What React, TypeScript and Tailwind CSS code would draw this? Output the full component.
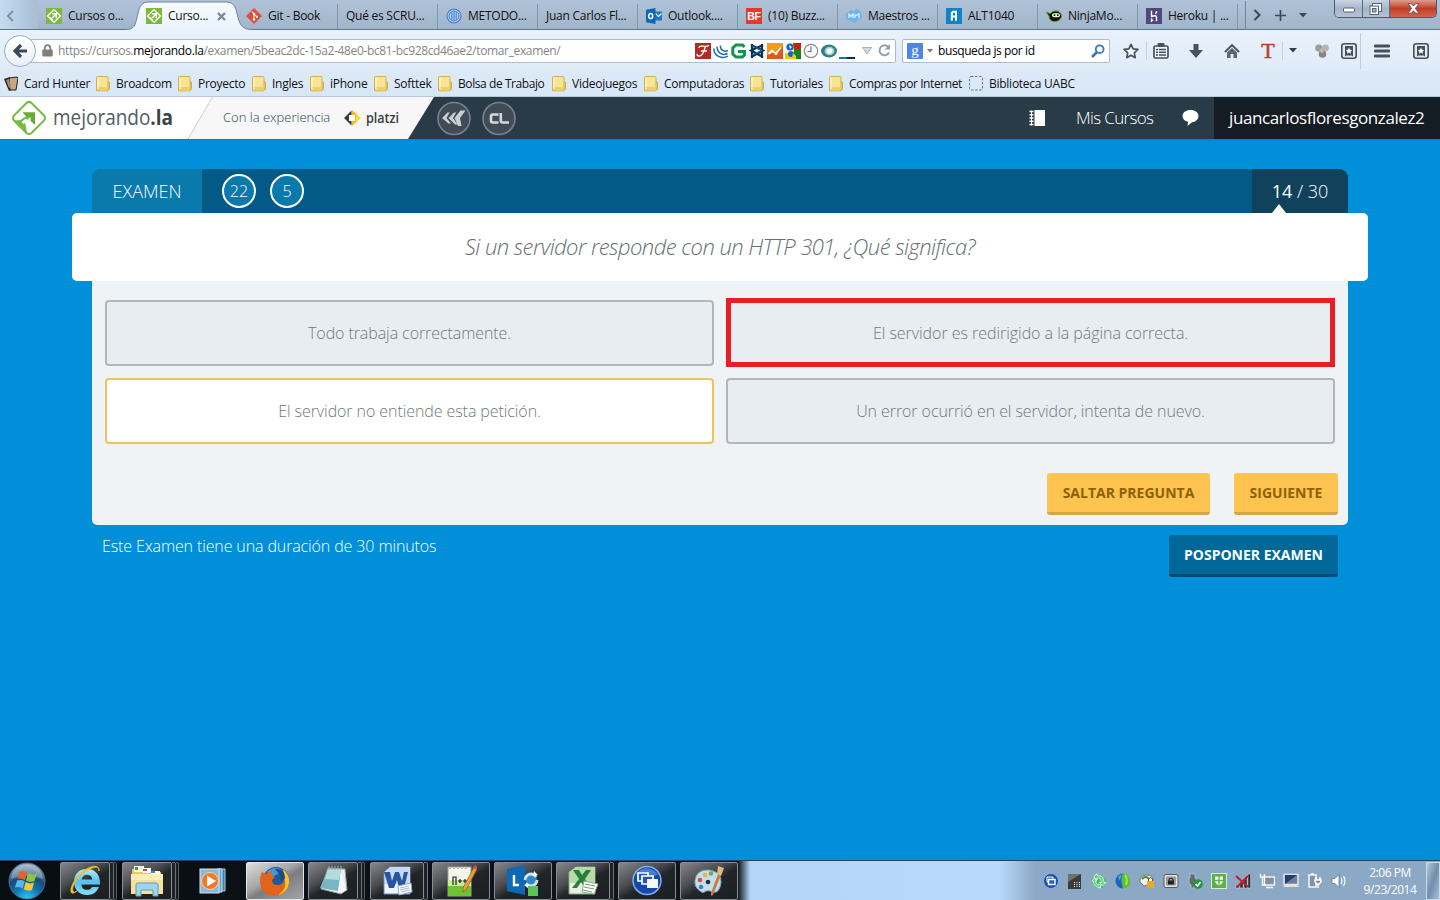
import React from "react";

type IconProps = { name: string };

function Svg({ w = 16, h = 16, vb, children }: { w?: number; h?: number; vb?: string; children: React.ReactNode }) {
  return (
    <svg width={w} height={h} viewBox={vb ?? `0 0 ${w} ${h}`} className="block shrink-0" aria-hidden="true">
      {children}
    </svg>
  );
}

function Favicon({ name }: IconProps) {
  switch (name) {
    case "mejorando":
      return (
        <Svg>
          <rect width="16" height="16" fill="#7db83f" />
          <path d="M8 1.600 14.400 8 8 14.400 1.600 8Z" fill="none" stroke="#fff" strokeWidth="1.300" strokeLinejoin="round" />
          <path d="M6 5.800h4.300v4.400M10 6.200 6.200 10M4 9.500l2.500 2.800" fill="none" stroke="#fff" strokeWidth="1.500" />
        </Svg>
      );
    case "git":
      return (
        <Svg>
          <path d="M8 .5 15.500 8 8 15.500.5 8Z" fill="#e04e3a" stroke="#e04e3a" strokeLinejoin="round" />
          <path d="M5.600 3.400 8 5.800V12M8 6l3 3" stroke="#f6d9d3" strokeWidth="1.200" fill="none" />
          <circle cx="8" cy="6" r="1.200" fill="#fff" />
          <circle cx="8" cy="11.500" r="1.200" fill="#fff" />
          <circle cx="11" cy="8.800" r="1.100" fill="#fff" />
        </Svg>
      );
    case "globe":
      return (
        <Svg>
          <circle cx="8" cy="8" r="7" fill="#b9d0ee" stroke="#3f7fdc" strokeWidth="1.100" />
          <circle cx="8" cy="8" r="5" fill="none" stroke="#3f7fdc" />
          <path d="M5.800 4.400v7.200M8 3.500v9M10.200 4.400v7.200" stroke="#3f7fdc" strokeWidth="1.100" />
        </Svg>
      );
    case "outlook":
      return (
        <Svg>
          <rect x="8" y="3.500" width="8" height="9" fill="#1c79c8" />
          <path d="m9.500 5.500 3 3 3-3" stroke="#fff" strokeWidth="1.200" fill="none" />
          <path d="M0 1.800 9.500 0v16L0 14.200Z" fill="#0a68b5" />
          <ellipse cx="4.700" cy="8" rx="2" ry="2.600" fill="none" stroke="#fff" strokeWidth="1.500" />
        </Svg>
      );
    case "bf":
      return (
        <Svg>
          <rect width="16" height="16" fill="#e33a2b" />
          <text x="8" y="12" textAnchor="middle" fill="#fff" fontSize="10.500" fontWeight="700" fontFamily="Liberation Sans, sans-serif">BF</text>
        </Svg>
      );
    case "maestros":
      return (
        <Svg>
          <path d="M5 2 8 3.500 10.500.8 15 4l.8 6-4 1.800L9 15l-4-2.500L.6 11.400 0 5.500Z" fill="#69b3ee" />
          <path d="M3 10V6l2 2.400L7 6v4M9 6v4M9 8l4-2v4" stroke="#eef7ff" strokeWidth="1.100" fill="none" />
        </Svg>
      );
    case "alt":
      return (
        <Svg>
          <rect width="16" height="16" fill="#0f83c6" />
          <path d="M5.800 12.800V5L7 3.700h3V12.800M6 8.500h4" fill="none" stroke="#fff" strokeWidth="2" />
        </Svg>
      );
    case "ninja":
      return (
        <Svg>
          <path d="M0 4 4 5.500Q7 2 12 3q4 2 3.500 6-2 5-8 4.500Q3 12.500 3 8Z" fill="#10160c" stroke="#63a51c" strokeWidth=".9" />
          <rect x="6" y="5.200" width="8" height="4" rx="2" fill="#eff5e6" />
          <circle cx="8.500" cy="7.200" r=".9" fill="#111" />
          <circle cx="11.800" cy="7.200" r=".9" fill="#111" />
        </Svg>
      );
    case "heroku":
      return (
        <Svg>
          <rect width="16" height="16" fill="#51467f" />
          <path d="M5.500 2.800v5.700q5-2 5 1V13.200M5.500 10.500v2.500l1.400-1.300M10.500 3v1.500L9.300 5.800" stroke="#fff" strokeWidth="1.400" fill="none" />
        </Svg>
      );
    default:
      return null;
  }
}

const tabs = [
  { icon: "mejorando", label: "Cursos o..." },
  { icon: "mejorando", label: "Curso...", active: true },
  { icon: "git", label: "Git - Book" },
  { icon: "", label: "Qué es SCRU..." },
  { icon: "globe", label: "METODO..." },
  { icon: "", label: "Juan Carlos Fl..." },
  { icon: "outlook", label: "Outlook...." },
  { icon: "bf", label: "(10) Buzz..." },
  { icon: "maestros", label: "Maestros ..." },
  { icon: "alt", label: "ALT1040" },
  { icon: "ninja", label: "NinjaMo..." },
  { icon: "heroku", label: "Heroku | ..." },
];

function WindowButtons() {
  return (
    <div className="absolute top-0 right-[3px] flex h-[18px] w-[103px] overflow-hidden rounded-b-[5px] border border-t-0 border-[#4c596b] text-white">
      <div className="flex w-[28px] items-center justify-center border-r border-[#5d6b7e] bg-linear-to-b from-[#c9d5e3] via-[#a5b6ca] to-[#b3c4d8] pt-[3px]">
        <Svg w={12} h={6}><rect x=".5" y="1" width="11" height="4" rx="1" fill="#fff" stroke="#566277" /></Svg>
      </div>
      <div className="flex w-[27px] items-center justify-center border-r border-[#5d6b7e] bg-linear-to-b from-[#c9d5e3] via-[#a5b6ca] to-[#b3c4d8] pr-[2px]">
        <Svg w={13} h={12}>
          <rect x="3.500" y=".5" width="9" height="8" fill="#fff" stroke="#566277" />
          <rect x="1" y="3" width="8.500" height="8.500" fill="#fff" stroke="#566277" />
          <rect x="3.500" y="5.500" width="3.500" height="3.500" fill="#a5b6ca" stroke="#566277" />
        </Svg>
      </div>
      <div className="flex flex-1 items-center justify-center bg-linear-to-b from-[#dd9c8c] via-[#bf3c24] to-[#d0654c]">
        <Svg w={13} h={11}>
          <path d="M1 .7h3.300L6.500 3 8.700.7H12L8.400 5.400 12 10.200H8.700L6.500 7.800 4.300 10.200H1L4.600 5.400Z" fill="#fff" stroke="#6b3b3b" strokeWidth=".8" />
        </Svg>
      </div>
    </div>
  );
}

function TabStrip() {
  return (
    <div className="relative flex h-[30px] w-full border-b border-[#5f7690] bg-linear-to-b from-[#b0c3d7] to-[#a0b4cb] text-[12px] tracking-[-0.25px] text-[#111]">
      <div className="w-[38px] shrink-0 bg-linear-to-r from-[#c3dcf0] to-[#a9bdd3] pt-[10px] pl-[6px]">
        <Svg w={9} h={12}><path d="M7 1 2 6l5 5" stroke="#7d90a6" strokeWidth="2" fill="none" /></Svg>
      </div>
      {tabs.map((t, i) => (
        <div key={i} className="relative h-[30px] w-[100px] shrink-0">
          {t.active && (
            <div className="absolute top-0 -left-[12px]">
              <Svg w={126} h={31}>
                <defs>
                  <linearGradient id="tab" x1="0" y1="0" x2="0" y2="1">
                    <stop offset="0" stopColor="#f8fbfe" />
                    <stop offset="1" stopColor="#e9f2fb" />
                  </linearGradient>
                </defs>
                <path d="M0 31v-1.500c8 0 9-4 11-12l2-8Q15 2 22 2H101q7 0 9 7.500l2 8c2 8 5 12 14 12V31Z" fill="url(#tab)" />
                <path d="M0 29.500c8 0 9-4 11-12l2-8Q15 2 22 2H101q7 0 9 7.500l2 8c2 8 5 12 14 12" fill="none" stroke="#6c839d" />
              </Svg>
            </div>
          )}
          <div className="relative flex h-full items-center gap-[6px] pt-[2px] pl-[8px]">
            {t.icon && <Favicon name={t.icon} />}
            <span className="whitespace-nowrap">{t.label}</span>
            {t.active && (
              <span className="absolute top-[12px] left-[79px]">
                <Svg w={9} h={9}><path d="m1 1 7 7M8 1 1 8" stroke="#7c8a9c" strokeWidth="2.400" /></Svg>
              </span>
            )}
          </div>
          {i >= 2 && <div className="absolute top-[4px] right-0 h-[25px] w-px bg-[#8296ad]" />}
        </div>
      ))}
      <div className="flex h-[29px] items-center pt-[1px]">
        <div className="ml-[7px] h-[29px] w-px bg-[#71869f]" />
        <div className="ml-[7px]"><Svg w={9} h={12}><path d="m1.500 1 5 5-5 5" stroke="#3b4856" strokeWidth="2" fill="none" /></Svg></div>
        <div className="ml-[13px]"><Svg w={11} h={11}><path d="M5.500 0v11M0 5.500h11" stroke="#3b4856" strokeWidth="1.700" /></Svg></div>
        <div className="ml-[13px]"><Svg w={8} h={5}><path d="M0 0h8L4 4.500Z" fill="#3b4856" /></Svg></div>
      </div>
      <WindowButtons />
    </div>
  );
}

function AddonIcons() {
  return (
    <div className="flex items-center gap-[2px]">
      <Svg><rect width="16" height="16" fill="#b52a27" /><path d="M4 5q0-2.500 4-1.800t6-.9M10.500 3Q8 13 4.500 13T2.500 11M6 8h6" stroke="#fff" strokeWidth="1.300" fill="none" /></Svg>
      <Svg>
        <path d="M.8 5.500Q.8 13 9 14.500q3.500.400 6-1.500M4 3.500Q4 10 10 11.300q2.500.400 4.500-.8M7.500 2.500Q7 6.500 11 8q2 .5 4-.5" stroke="#2169ae" strokeWidth="1.500" fill="none" />
      </Svg>
      <Svg><path d="M13.500 4 11.500 2H5L1.800 5v6L5 14h6.500l2-2V8.500H7" fill="none" stroke="#159352" strokeWidth="3" /></Svg>
      <Svg><path d="M3 1v14M13 1v14M2 2l12 5.500L2 14M14 2 2 7.500 14 14" fill="none" stroke="#0d2f52" strokeWidth="2.200" /><path d="M3 3l10 4.500M3 12l10-4.500" stroke="#1e6da8" strokeWidth="1.200" /></Svg>
      <Svg><rect width="16" height="16" fill="#f49a1f" /><path d="M0 12 5 8l4 3 6-7 1-1v13H0Z" fill="#e4561f" /><path d="m1.500 11 3.500-3 4 2.500L14 4.500" stroke="#fff" strokeWidth="1.700" fill="none" /><circle cx="5" cy="8" r="1.500" fill="#fff" /><circle cx="9" cy="10.500" r="1.500" fill="#fff" /></Svg>
      <Svg><rect width="16" height="16" fill="#f6f8fa" /><path d="M8 0h8v8H9Z" fill="#d8190e" /><path d="M9 6h7v10H9Z" fill="#16851b" /><path d="M0 10h8v6H0Z" fill="#f8c71a" /><circle cx="5" cy="4" r="3.600" fill="#1a62b9" /><circle cx="6" cy="11" r="3" fill="#1a62b9" /><path d="M4 2l3 2-2 2Z" fill="#fff" /><path d="M8 10l3 3v3H7Z" fill="#f8c71a" /></Svg>
      <Svg><circle cx="8" cy="8" r="6.700" fill="#f7f7f7" stroke="#8d8d8d" strokeWidth="1.200" /><path d="M8 3.500v5H4.500" stroke="#777" strokeWidth="1.200" fill="none" /></Svg>
      <Svg><ellipse cx="8" cy="8" rx="8" ry="6.500" fill="#2b8085" /><ellipse cx="8.500" cy="8" rx="5" ry="4.300" fill="#9ed0ce" /><ellipse cx="8.500" cy="8" rx="3" ry="2.800" fill="#fff" /></Svg>
      <Svg><path d="M0 15h16" stroke="#087c9c" strokeWidth="2" /><path d="M8 15h8" stroke="#0b2c48" strokeWidth="2" /></Svg>
    </div>
  );
}

function BookBox() {
  return (
    <Svg><rect x=".8" y=".8" width="14.400" height="14.400" rx="2.500" fill="#e2e9f0" stroke="#47515c" strokeWidth="1.600" /><path d="M4 3h8v10.500l-1.500-1h-5L4 13.500Z" fill="#47515c" /><path d="m8 4.500 1 2.200 2.300.2-1.700 1.600.5 2.300L8 9.600l-2.100 1.200.5-2.300-1.700-1.600 2.300-.2Z" fill="#fff" /></Svg>
  );
}

function NavBar() {
  return (
    <div className="flex h-[41px] items-center bg-linear-to-b from-[#e9f2fb] to-[#dfebf8] text-[12px]">
      <div className="relative z-10 ml-[4px] flex size-[32px] shrink-0 items-center justify-center rounded-full border border-[#9aacbf] bg-linear-to-b from-white to-[#e9f0f8]">
        <Svg w={15} h={14}><path d="M8 1 2 7l6 6M2.500 7H14" stroke="#3c4855" strokeWidth="3.200" fill="none" /></Svg>
      </div>
      <div className="-ml-[8px] flex h-[24px] w-[868px] shrink-0 items-center rounded-r-[2px] border border-[#aebdcd] bg-white pl-[13px]">
        <Svg w={11} h={13}><path d="M2.700 6V4a2.800 2.800 0 0 1 5.600 0v2" stroke="#808080" strokeWidth="1.800" fill="none" /><rect x=".3" y="5.500" width="10.400" height="7" rx="1" fill="#808080" /></Svg>
        <span className="ml-[5px] w-[637px] shrink-0 tracking-[-0.36px] whitespace-nowrap text-[#858585]">
          https://cursos.<span className="text-black">mejorando.la</span>/examen/5beac2dc-15a2-48e0-bc81-bc928cd46ae2/tomar_examen/
        </span>
        <AddonIcons />
        <div className="ml-[7px]"><Svg w={10} h={8}><path d="M.5.500h9L5 7Z" fill="#d6dade" stroke="#a9b0b8" /></Svg></div>
        <div className="ml-[6px]"><Svg w={13} h={13}><path d="M10.500 3.300A5 5 0 1 0 11 8.500" fill="none" stroke="#96a0aa" strokeWidth="2" /><path d="M12 0v5.500H6.500Z" fill="#96a0aa" /></Svg></div>
      </div>
      <div className="ml-[6px] flex h-[24px] w-[208px] shrink-0 items-center rounded-[2px] border border-[#aebdcd] bg-white pl-[4px]">
        <Svg><rect width="16" height="16" rx="1" fill="#4b86e8" /><text x="8" y="12" fontSize="15" textAnchor="middle" fill="#fff" fontFamily="Liberation Serif, serif">g</text></Svg>
        <div className="ml-[4px]"><Svg w={6} h={4}><path d="M0 0h6L3 3.500Z" fill="#777" /></Svg></div>
        <span className="ml-[5px] w-[153px] tracking-[-0.4px] text-black">busqueda js por id</span>
        <Svg w={14} h={14}><circle cx="8.700" cy="5.200" r="3.900" fill="none" stroke="#3477b5" strokeWidth="1.800" /><path d="M6 8 1 13" stroke="#3477b5" strokeWidth="2.600" /></Svg>
      </div>
      <div className="flex items-center">
        <div className="ml-[13px]"><Svg><path d="m8 1.300 2.100 4.500 4.800.6-3.600 3.400.9 4.900L8 12.300l-4.200 2.400.9-4.900L1.100 6.400l4.800-.6Z" fill="#f4f8fc" stroke="#47515c" strokeWidth="1.700" strokeLinejoin="round" /></Svg></div>
        <div className="ml-[7px] h-[18px] w-px bg-[#c4d0dd]" />
        <div className="ml-[6px]"><Svg><path d="M2.500 3h11q1.500 0 1.500 1.500v9q0 1.500-1.500 1.500h-11Q1 15 1 13.500v-9Q1 3 2.500 3Z" fill="#eef3f8" stroke="#47515c" strokeWidth="1.700" /><rect x="4.500" y="0" width="7" height="4" rx="1" fill="#47515c" /><path d="M3 6.500h2m1 0h7M3 9.300h2m1 0h7M3 12h2m1 0h7" stroke="#47515c" strokeWidth="1.600" /></Svg></div>
        <div className="ml-[20px]"><Svg w={14} h={14}><path d="M4.500 0h5v6H14l-7 8L0 6h4.500Z" fill="#47515c" /></Svg></div>
        <div className="ml-[21px]"><Svg><path d="M1 9 8 2l7 7" fill="none" stroke="#47515c" strokeWidth="1.900" /><path d="M3 9.500 8 5l5 4.500V15H9.500v-4h-3v4H3Z" fill="#5b6570" /></Svg></div>
        <div className="ml-[21px] h-[24px] w-[14px] text-center font-['Liberation_Serif',serif] text-[22px] leading-[24px] text-[#be3f27] [-webkit-text-stroke:0.5px]">T</div>
        <div className="ml-[7px] h-[18px] w-px bg-[#c4d0dd]" />
        <div className="ml-[6px]"><Svg w={8} h={5}><path d="M0 0h8L4 4.500Z" fill="#333d48" /></Svg></div>
        <div className="ml-[18px]"><Svg w={14} h={16}><circle cx="3.800" cy="5" r="3.600" fill="#9b9b9b" /><circle cx="10.500" cy="5" r="3.400" fill="#b5b5b5" /><circle cx="7.500" cy="11" r="3.800" fill="#858585" /><circle cx="7" cy="7.500" r="2.200" fill="#bdbba9" /></Svg></div>
        <div className="ml-[12px]"><BookBox /></div>
        <div className="ml-[3px] h-[36px] w-px bg-[#c0ccd9]" />
        <div className="ml-[13px]"><Svg w={16} h={14}><path d="M1 2h14M1 7h14M1 12h14" stroke="#47515c" strokeWidth="2.800" strokeLinecap="round" /></Svg></div>
        <div className="ml-[23px]"><BookBox /></div>
      </div>
    </div>
  );
}

function Bookmarks() {
  const items = [
    { label: "Card Hunter", w: "w-[92px]", kind: "cards" },
    { label: "Broadcom", w: "w-[82px]" },
    { label: "Proyecto", w: "w-[74px]" },
    { label: "Ingles", w: "w-[58px]" },
    { label: "iPhone", w: "w-[64px]" },
    { label: "Softtek", w: "w-[64px]" },
    { label: "Bolsa de Trabajo", w: "w-[114px]", tight: true },
    { label: "Videojuegos", w: "w-[92px]" },
    { label: "Computadoras", w: "w-[106px]" },
    { label: "Tutoriales", w: "w-[79px]" },
    { label: "Compras por Internet", w: "w-[140px]", tight: true },
    { label: "Biblioteca UABC", w: "w-[120px]", kind: "dashed" },
  ];
  return (
    <div className="flex h-[26px] items-center border-b border-[#b9c8d8] bg-linear-to-b from-[#dce9f7] to-[#d8e7f7] pl-[4px] text-[12px] text-[#111]">
      {items.map((b) => (
        <div key={b.label} className={`flex shrink-0 items-center gap-[6px] ${b.w}`}>
          {b.kind === "cards" ? (
            <Svg w={14} h={16}><path d="m0 3 6-2 4 12-5 2Z" fill="#2b2019" /><path d="m5 2 8-1 1 1-2 12H6Z" fill="#c8a884" stroke="#2b2019" /><path d="m2 4 3-1 2 8-2 1Z" fill="#a58a6c" /></Svg>
          ) : b.kind === "dashed" ? (
            <Svg w={14} h={15}><rect x=".5" y=".5" width="13" height="13.500" rx="1.500" fill="none" stroke="#68747f" strokeDasharray="2.500 1.500" /></Svg>
          ) : (
            <Svg w={14} h={16}><path d="M11 6h2q.6 0 .6 1v5.500q0 1-.6 1h-2Z" fill="#f0d469" stroke="#c0992f" strokeWidth=".8" /><path d="M.5 1.500Q.5.500 1.500.500h9.500q1 0 1 1v13.300H.5Z" fill="#f6e594" stroke="#cda943" strokeWidth=".9" /><path d="M1 11h10.500v3.400H1Z" fill="#ecd06a" /><path d="M2 2v11" stroke="#fdf7cf" strokeWidth="1.200" /></Svg>
          )}
          <span className={b.tight ? "tracking-[-0.42px] whitespace-nowrap" : "tracking-[-0.26px] whitespace-nowrap"}>{b.label}</span>
        </div>
      ))}
    </div>
  );
}

function SiteHeader() {
  return (
    <header className="relative flex h-[42px] items-center bg-[#283b47]">
      <div className="absolute inset-0">
        <Svg w={440} h={42}>
          <path d="M0 0H434L408 42H0Z" fill="#f7f7f7" />
          <path d="M0 0H212.500L188 42H0Z" fill="#fff" />
          <path d="M212.500 0 188 42" stroke="#ccc" strokeWidth="1" />
        </Svg>
      </div>
      <div className="relative ml-[11px] flex w-[212px] items-center">
        <Svg w={36} h={36}>
          <path d="M15.500 3Q18 .8 20.500 3L33 15.500Q35 18 33 20.500L20.500 33Q18 35 15.500 33L3 20.500Q1 18 3 15.500Z" fill="none" stroke="#78b943" strokeWidth="2" />
          <path d="M11.500 12.300H24V25L19.500 21V17H15.500Z" fill="#6aa83c" />
          <path d="M19.500 17 12.500 24 8.500 20.500 15.500 16Z" fill="#78b943" />
          <path d="M3.500 20.500 9.500 20q3.500 1 5 4.500l1.500 8.500Z" fill="#78b943" />
          <path d="M15 18.500l1.500 1.500-4 4-2-2Z" fill="#fff" />
        </Svg>
        <svg width="130" height="36" className="ml-[6px] block overflow-visible" role="img">
          <text x="0" y="25" fontFamily="Open Sans, sans-serif" fontSize="21.500" fill="#555c60" textLength="120" lengthAdjust="spacingAndGlyphs">
            mejorando<tspan fontWeight="700" fill="#3c4347">.la</tspan>
          </text>
        </svg>
      </div>
      <span className="relative w-[121px] text-[13px] font-light whitespace-nowrap text-[#27424f]">Con la experiencia</span>
      <div className="relative flex items-center">
        <Svg w={17} h={18}><path d="M7.500 1.500 0 9l7.500 7.500Z" fill="#3a3a3a" /><path d="M8 1l4 3.500L16.500 9 8 17Z" fill="#f3bd12" /><path d="m12 4.500 4.500 4.500-4.500 4.500Z" fill="#f9d84a" /><path d="M5 6h6v6H5Z" fill="#fff" /></Svg>
        <svg width="40" height="30" className="ml-[5px] block overflow-visible"><text x="0" y="20" fontFamily="Open Sans, sans-serif" fontSize="14.500" fontWeight="600" fill="#3c3c3c" textLength="33" lengthAdjust="spacingAndGlyphs">platzi</text></svg>
      </div>
      <div className="relative ml-[31px] flex gap-[11px]">
        <Svg w={34} h={36}><circle cx="17" cy="18.500" r="16" fill="#414b57" stroke="#76818c" strokeWidth="1.600" /><path d="M10.500 12.500h2.200l-3.200 5.500 4.500 5.500h-2.600L5 18ZM17 12.500h2.200l-3.200 5.500 4.500 6.500h-2.600L11.500 18ZM23.500 10.500h5l-5.500 7.500 1.500 8h-3.500L17.500 18Z" fill="#c9ced2" /></Svg>
        <Svg w={34} h={36}><circle cx="17" cy="18.500" r="16" fill="#414b57" stroke="#76818c" strokeWidth="1.600" /><path d="M16.500 14.500H11q-2 0-2 2v4q0 2 2 2h5.500M18.800 13v7.500q0 2 2 2H27" fill="none" stroke="#d5d9dc" strokeWidth="2.600" /></Svg>
      </div>
      <div className="relative ml-auto flex h-full items-center text-[17px] font-light text-white">
        <Svg w={16} h={16}><rect x="5.500" y="0" width="10.500" height="16" fill="#fff" /><path d="M2.500.500V15.500" stroke="#fff" /><path d="M.5 1.500h4M.5 4.700h4M.5 8h4M.5 11.200h4M.5 14.500h4" stroke="#fff" strokeWidth="1.500" /></Svg>
        <span className="ml-[31px] w-[106px] whitespace-nowrap tracking-[-0.65px]">Mis Cursos</span>
        <Svg w={17} h={16}><path d="M8.500 0C13 0 16.500 2.500 16.500 6S13.500 12 10 12.300L5.500 16l.5-4.200C2.500 11 .5 9 .5 6 .5 2.500 4 0 8.500 0Z" fill="#fff" /></Svg>
        <div className="ml-[15px] flex h-full w-[226px] items-center bg-[#141c24] pl-[15px] font-normal whitespace-nowrap tracking-[-0.4px]">juancarlosfloresgonzalez2</div>
      </div>
    </header>
  );
}

function Exam() {
  const option = "flex h-[66px] items-center justify-center rounded-[4px] border-2 text-[16px] font-light tracking-[-0.08px]";
  return (
    <main className="flex flex-1 flex-col items-center border-t border-[#0a7fbd] bg-[#008fd8] pt-[29px] font-light">
      <div className="flex h-[44px] w-[1256px] overflow-hidden rounded-t-[9px] bg-[#045a86] text-[18px] text-white">
        <div className="flex w-[110px] items-center justify-center bg-[#0a79ab]">EXAMEN</div>
        <div className="flex items-center gap-[14px] pl-[20px] text-[16px]">
          <div className="flex size-[34px] items-center justify-center rounded-full border-2 border-white bg-[#0a79ab]">22</div>
          <div className="flex size-[34px] items-center justify-center rounded-full border-2 border-white bg-[#0a79ab]">5</div>
        </div>
        <div className="relative ml-auto flex w-[96px] items-center justify-center bg-[#10435b] whitespace-pre">
          <span className="font-normal">14</span> / 30
          <span className="absolute bottom-0 left-[20px]"><Svg w={14} h={9}><path d="M7 0 14 9H0Z" fill="#fff" /></Svg></span>
        </div>
      </div>
      <div className="flex h-[68px] w-[1296px] items-center justify-center rounded-[5px] bg-white pb-[1px] text-[22px] tracking-[-0.55px] text-[#65706f] italic">
        Si un servidor responde con un HTTP 301, ¿Qué significa?
      </div>
      <div className="h-[244px] w-[1256px] rounded-b-[5px] bg-[#eff3f6] px-[13px] pt-[19px]">
        <div className="grid grid-cols-2 gap-[12px] text-[#70797d]">
          <div className={`${option} border-[#b1b7bb] bg-[#e8edf1]`}>Todo trabaja correctamente.</div>
          <div className="-mt-[2px] -mb-px flex h-[69px] items-center justify-center border-[5px] border-[#e81e25] bg-[#e8edf1] text-[16px] font-light tracking-[-0.04px]">El servidor es redirigido a la página correcta.</div>
          <div className={`${option} border-[#edc35e] bg-white`}>El servidor no entiende esta petición.</div>
          <div className={`${option} border-[#b1b7bb] bg-[#e8edf1]`}>Un error ocurrió en el servidor, intenta de nuevo.</div>
        </div>
        <div className="-mr-[3px] mt-[29px] flex justify-end gap-[24px] text-[14px] font-bold text-[#8d6204]">
          <button className="h-[42px] w-[163px] rounded-[3px] border-b-[3px] border-[#d8a445] bg-[#fec44f]">SALTAR PREGUNTA</button>
          <button className="h-[42px] w-[104px] rounded-[3px] border-b-[3px] border-[#d8a445] bg-[#fec44f]">SIGUIENTE</button>
        </div>
      </div>
      <div className="flex w-[1236px] items-start justify-between pt-[10px] text-white">
        <p className="text-[16px] leading-[22px] tracking-[-0.12px]">Este Examen tiene una duración de 30 minutos</p>
        <button className="h-[42px] w-[169px] rounded-[3px] border-b-[3px] border-[#024c74] bg-[#006899] text-[14px] font-bold">POSPONER EXAMEN</button>
      </div>
    </main>
  );
}

function AppIcon({ name }: IconProps) {
  switch (name) {
    case "ie":
      return (
        <Svg w={34} h={34}>
          <defs><linearGradient id="ie" x1="0" y1="0" x2="0" y2="1"><stop offset="0" stopColor="#b5ecfd" /><stop offset=".5" stopColor="#55c1ef" /><stop offset="1" stopColor="#8adcf8" /></linearGradient></defs>
          <path d="M19 5C10 5 6 11 6 18s5 13 13 13c6 0 10-3 12-8h-7c-1 2-2.500 2.800-5 2.800-3.500 0-5.500-2-5.500-5.300H32C32.500 11 27.500 5 19 5Zm-5.500 10.500c.5-3 2.500-4.700 5.500-4.700s5 1.700 5.300 4.700Z" fill="url(#ie)" />
          <path d="M9 27C-1 35 2 19 12 10 20 2 32-1 31 7q.5-6-8-2.500C12 9 3 21 5 27q1 2.500 4 0Z" fill="#f3c838" stroke="#e8b820" strokeWidth=".8" />
        </Svg>
      );
    case "explorer":
      return <Svg w={34} h={32}><path d="M2 4h10l2 3h17v21H2Z" fill="#e8c766" /><path d="M4 1h10v6H4Z" fill="#f9f5e3" /><path d="M5 2h3v3H5Z" fill="#3aa04a" /><path d="M13 3h8v5h-8Z" fill="#fff" /><path d="M13 4h4v2h-4Z" fill="#ce4b38" /><path d="M21 6h9v4h-9Z" fill="#fff" /><path d="M21 6h4v2h-4Z" fill="#3b86c9" /><path d="M1 9h32v20H1Z" fill="#f4e19b" /><path d="M1 9h32v6H1Z" fill="#faedb9" /><path d="M6 31V20q0-2 2-2h18q2 0 2 2v11h-5v-6H11v6Z" fill="#9fd3ee" stroke="#5d9dc4" /></Svg>;
    case "wmp":
      return <Svg w={28} h={28}><path d="M20 2h6v22h-6Z" fill="#3f7eb0" stroke="#a8cde8" /><path d="M18 2h5v23h-5Z" fill="#72a7cf" stroke="#c2def1" /><rect x="1" y="2" width="19" height="24" fill="#8db8d8" stroke="#d1e5f3" /><circle cx="11" cy="14" r="8.500" fill="#ef7b24" stroke="#fbd2aa" /><path d="M8 8.500 17 14l-9 5.500Z" fill="#fff" /></Svg>;
    case "firefox":
      return <Svg w={32} h={32}><circle cx="17" cy="15" r="13" fill="#1d5a9e" /><path d="M8 7q6-6 14-3l-3 5-6 3Z" fill="#4a96d3" /><path d="M3 7 7 9q3-3 6-2l-1 3 4 2-3 3q0 5 6 5 5 0 6-5 2-6-3-11 9 5 8 13-2 13-14 14Q2 30 1 17 1 11 3 7Z" fill="#e4631c" /><path d="M24 4q7 6 6 14-2 10-11 12 9-6 7-14Z" fill="#f7c331" /><path d="M16 4q10-1 10 9l-4 4-1-7Z" fill="#1a4c8c" /></Svg>;
    case "notepad":
      return <Svg w={32} h={32}><path d="m11 3 17 1 2 21-6 4-20-5Z" fill="#e8edf0" stroke="#8f9aa2" /><path d="m11 4 13 1-3 21L3 23Z" fill="#78b6c2" /><path d="m11 4 13 1-2 10-14-1Z" fill="#b3dbe2" /><path d="m24 7 5 18-8 3Z" fill="#f7f9fa" /><path d="M12 1v4m3-4v4m3-4v4m3-4v4m3-4v4" stroke="#9aa3a8" /></Svg>;
    case "word":
      return <Svg w={32} h={32}><path d="M9 2h20v27H3V7Z" fill="#eef4fb" stroke="#6d89b8" /><path d="M4 7 9 2h20v17H4Z" fill="#c8daf1" /><path d="M3 7h6l2 9 3-9h4l3 9 2-9h4l-4 16h-5l-2-8-3 8H8Z" fill="#2555a3" /><path d="M17 21 30 18l1 9-13 3Z" fill="#fff" stroke="#93a7c6" /><path d="m19 23 9-2m-9 4 9-2m-8 4 9-2" stroke="#a4b7d2" /></Svg>;
    case "npp":
      return <Svg w={32} h={34}><rect x="3" y="3" width="23" height="29" fill="#f4f6ee" stroke="#9ca38f" /><path d="M3 20h23v12H3Z" fill="#6dc332" /><path d="M3 16h23v6H3Z" fill="#c9ec9c" /><path d="M5 1v4m4-4v4m4-4v4m4-4v4m4-4v4" stroke="#777" strokeDasharray="2 1" /><path d="M8 21v-8h3v8M13 17h4m-2-2v4M18 17h4m-2-2v4" stroke="#222" strokeWidth="1.200" fill="none" /><path d="m29 3 3 2-11 21-3 2v-4Z" fill="#e9a23b" stroke="#8c5b20" strokeWidth=".7" /><path d="m28 4 2-3 3 2-1 3Z" fill="#d0504d" /></Svg>;
    case "lync":
      return <Svg w={34} h={34}><path d="M1 5 19 1v30L1 27Z" fill="#0d68b8" /><path d="M8 11v10h5" fill="none" stroke="#fff" strokeWidth="2.400" /><circle cx="25" cy="16" r="6" fill="#2f88c8" stroke="#cfe7f5" strokeWidth="2.800" strokeDasharray="15 3.500" /><path d="m28 7 4 4-5 1ZM18 21l5-1 0 5Z" fill="#fff" /><rect x="22" y="22" width="10" height="10" fill="#5cc456" /></Svg>;
    case "excel":
      return <Svg w={32} h={32}><path d="M9 2h19v27H2V7Z" fill="#e6f1e4" stroke="#78a979" /><path d="M3 7 9 2h19v16H3Z" fill="#b9d8ac" /><path d="M6 5h6l3 5 4-5h5l-6 9 6 9h-6l-4-6-4 6H5l7-9Z" fill="#278238" /><path d="m17 16 14 3-4 10-12-2Z" fill="#fff" stroke="#8daa89" /><path d="m18 19 10 2m-11 1 10 2m-11 1 9 2" stroke="#71a06c" /></Svg>;
    case "remote":
      return <Svg w={32} h={32}><circle cx="16" cy="15.500" r="14" fill="#1548a8" stroke="#7eb0eb" strokeWidth="1.500" /><path d="M5 9Q15-3 27 9q-11 8-22 0" fill="#467fd0" /><path d="M7 8h10v8H7Z" fill="#2458b0" stroke="#fff" strokeWidth="1.700" /><path d="M11 11h11v8H11Z" fill="#2458b0" stroke="#fff" strokeWidth="1.700" /><rect x="16" y="14" width="11" height="9" fill="#f4f8fd" /></Svg>;
    case "paint":
      return <Svg w={34} h={34}><path d="M3 16Q5 5 17 6q13 2 12 13-2 11-8 9-4-2-7-1-3 3-6 0-6-4-5-11Z" fill="#c4dfec" stroke="#79a5bb" /><circle cx="8" cy="16" r="2.300" fill="#db4a3e" /><circle cx="13" cy="11" r="2.300" fill="#efb142" /><circle cx="19" cy="9.500" r="2.300" fill="#6cb34e" /><circle cx="16" cy="18" r="2.300" fill="#222e38" /><circle cx="9" cy="23" r="2.300" fill="#477fc2" /><path d="m26 10 3 1-8 20q-3 2-2-2Z" fill="#cb7c3c" /><path d="m25 10 1-8 6 2-3 8Z" fill="#e2b783" /></Svg>;
    default:
      return null;
  }
}

function TrayIcon({ n }: { n: number }) {
  const art = [
    <><circle cx="8" cy="8" r="7.500" fill="#1d4fae" stroke="#87aee4" /><path d="M4 4h6v5H4Z" fill="#2b62bd" stroke="#fff" /><path d="M5.500 6.500H12v5H5.500Z" fill="#2b62bd" stroke="#fff" strokeWidth="1.400" /></>,
    <><rect x="1" y="1" width="13" height="15" fill="#3b3b3b" /><path d="M1 1h13L1 9Z" fill="#6f6f6f" /><path d="M7 9.500h1m1.500 0h1m1.500 0h1M7 11.500h1m1.500 0h1m1.500 0h1M7 13.500h1m1.500 0h1m1.500 0h1" stroke="#fff" /></>,
    <><path d="M4 2h6l5 5v4l-4 4H6l-5-5V6Z" fill="#3fb768" opacity=".85" /><path d="M6 .7 2.500 4 6 7V5q4-1 4.500 4.500h-2L11.500 13 15 9.500h-2Q13 2 6 2.500ZM9.500 15v-3Q5 12 4 8h2L3.500 5 1 8h1q1 6 7.500 7" fill="#69cd80" stroke="#e1fbe4" strokeWidth=".9" /></>,
    <><circle cx="8" cy="8" r="7.500" fill="#5bc32f" /><path d="M8 .5Q5 6 8 15.500A7.500 7.500 0 0 1 8 .5" fill="#1b64c4" /><path d="M3 4q2-2.500 4-2.500Q5 5 5 8Z" fill="#5aa5ea" /><path d="M10 2q3 3 1 10" stroke="#a9e15a" strokeWidth="2" fill="none" /></>,
    <><path d="M1 9Q0 3 7 2q7 0 7 5l-3 4-6 2Z" fill="#f3f3ef" stroke="#777" /><path d="M3 6q4-4 7 0" stroke="#4a8b45" strokeWidth="2" fill="none" /><rect x="8" y="8" width="7" height="7" fill="#eda91f" /><path d="M9.500 8V6q2-3 4 0v2" stroke="#665532" fill="none" /></>,
    <><rect x="1" y="1.500" width="14" height="13" rx="2" fill="#e1e1e1" stroke="#5c5c5c" /><rect x="3" y="3.500" width="10" height="9" rx="1" fill="#9a9a9a" /><rect x="5" y="7.500" width="6" height="4" fill="#222" /><path d="M6 8V6q2-2 4 0v2" stroke="#222" fill="none" /></>,
    <><path d="M3 1h5v4h1v5L7 12v3H4v-3L2 10V5h1Z" fill="#626a72" stroke="#c6cdd3" strokeWidth=".7" /><circle cx="11" cy="11" r="4.800" fill="#25943b" /><path d="m8.500 11 2 2 3-4" stroke="#fff" strokeWidth="1.600" fill="none" /></>,
    <><rect x=".5" y=".5" width="15" height="15" fill="#5caf4a" stroke="#d5efc9" /><path d="M4 3.500h8v5q-1 3-4 4-3-1-4-4Z" fill="#f6fff0" /><path d="M8 3v9M4 7.500h8" stroke="#5caf4a" strokeWidth="1.300" /></>,
    <><path d="M1 12h3v3H1ZM5 9h3v6H5ZM9 5h3v10H9ZM13 1h2.500v14H13Z" fill="#26282a" stroke="#d6d9dc" strokeWidth=".5" /><path d="m1 3 12 11M13 3 2 14" stroke="#bd1f2d" strokeWidth="2" /></>,
    <><rect x="5.500" y="4" width="10" height="8" fill="#7b91a6" stroke="#fff" strokeWidth="1.300" /><path d="M7 14.500h7M1.500 1v3h4V1M3.500 4v8H7" stroke="#fff" strokeWidth="1.400" fill="none" /></>,
    <><rect x="1" y="1.500" width="14" height="10" fill="#6d7fa0" stroke="#e4e5e6" strokeWidth="1.500" /><path d="M2 2h12L2 11Z" fill="#273b73" /><path d="M0 14h16l-2-2H2Z" fill="#e7e1cd" /></>,
    <><rect x="2" y="2" width="7" height="12" fill="#8092a5" stroke="#fff" strokeWidth="1.400" /><path d="M4 1h3M8 7h6v2l-2 2h-2L8 9ZM9 4v3m4-3v3M11 11v4" stroke="#fff" strokeWidth="1.500" fill="#7c8998" /></>,
    <><path d="M1 5.500h3l4-4v13l-4-4H1Z" fill="#fff" stroke="#5d6c7b" strokeWidth=".7" /><path d="M10 5q2 3 0 6M12.500 3q3 5 0 10" stroke="#fff" strokeWidth="1.200" fill="none" /></>,
  ];
  return <Svg>{art[n]}</Svg>;
}

function Taskbar() {
  const apps = [
    { name: "ie", stack: 2 }, { name: "explorer", stack: 2 }, { name: "wmp", bare: true }, { name: "firefox", active: true },
    { name: "notepad", stack: 2 }, { name: "word", stack: 1 }, { name: "npp" }, { name: "lync" }, { name: "excel", stack: 1 }, { name: "remote" }, { name: "paint" },
  ];
  const dark = "rounded-[2px] border border-[#878d92] bg-[linear-gradient(150deg,#85878a_0%,#4a4c4f_38%,#222528_55%,#1c1f22_100%)]";
  return (
    <footer className="relative flex h-[40px] items-center border-t border-[#234761] bg-[linear-gradient(90deg,#080d12_0px,#10161c_738px,#b3d5f8_750px,#b8d9fa_1000px,#8ba8c5_1035px,#8ba8c5_1440px)]">
      <div className="flex w-[60px] shrink-0 justify-center pr-[6px]">
        <Svg w={38} h={38}>
          <defs>
            <radialGradient id="orb" cx=".5" cy="1" r=".95"><stop offset="0" stopColor="#2fd0fa" /><stop offset=".35" stopColor="#137bb8" /><stop offset=".65" stopColor="#174b78" /><stop offset="1" stopColor="#8fa3b5" /></radialGradient>
          </defs>
          <circle cx="19" cy="19" r="18" fill="url(#orb)" stroke="#4c6a84" />
          <path d="M3 17Q5 3 19 2.500 33 3 35 17q-16-6-32 0Z" fill="#fff" opacity=".28" />
          <path d="M11.500 9.500q4-1.500 7.500 1l-2 7.500q-4-2.500-7.500-1Z" fill="#e8602a" />
          <path d="M20 11q4 2.500 9 .5l-2.500 7.500q-4 2-8.500-.5Z" fill="#8bc53d" />
          <path d="M9 18.500q4-1.500 7.500.8l-2 7.200q-4-2.300-7.500-1Z" fill="#5bb6ec" />
          <path d="M17.700 20q4 2.500 8.300.5l-2 7.500q-4 1.800-8.300-.7Z" fill="#f7c934" />
        </Svg>
      </div>
      {apps.map((a) => {
        const width = a.stack === 2 ? "w-[50px]" : a.stack === 1 ? "w-[54px]" : "w-[58px]";
        const skin = a.bare
          ? ""
          : a.active
            ? "rounded-[2px] border border-[#e4e6e8] bg-[linear-gradient(150deg,#dcdddd_0%,#a5a6a8_42%,#7c7d7f_55%,#a3a5a7_100%)]"
            : dark;
        return (
          <div key={a.name} className="flex h-[38px] w-[62px] shrink-0">
            <div className={`flex h-[38px] items-center justify-center ${width} ${skin}`}><AppIcon name={a.name} /></div>
            {a.stack && <div className="w-[4px] rounded-r-[2px] border-y border-r border-[#6b7176] bg-[#202326]" />}
            {a.stack === 2 && <div className="w-[3px] rounded-r-[2px] border-y border-r border-[#54595e] bg-[#1a1d20]" />}
          </div>
        );
      })}
      <div className="ml-auto flex h-full items-center text-white">
        <div className="flex gap-[8px]">
          {Array.from({ length: 13 }, (_, i) => <TrayIcon key={i} n={i} />)}
        </div>
        <div className="ml-[9px] w-[68px] text-center text-[12px] leading-[17px] tracking-[-0.45px]"><div>2:06 PM</div><div>9/23/2014</div></div>
        <div className="ml-[2px] h-[38px] w-[14px] border border-[#c9d9e7] bg-linear-to-br from-[#b4c8dc] via-[#728eaa] to-[#a8c1d8]" />
      </div>
    </footer>
  );
}

export default function App() {
  return (
    <div className="flex h-[900px] w-[1440px] flex-col overflow-hidden font-['Open_Sans','Noto_Sans',sans-serif]">
      <TabStrip />
      <NavBar />
      <Bookmarks />
      <SiteHeader />
      <Exam />
      <Taskbar />
    </div>
  );
}
